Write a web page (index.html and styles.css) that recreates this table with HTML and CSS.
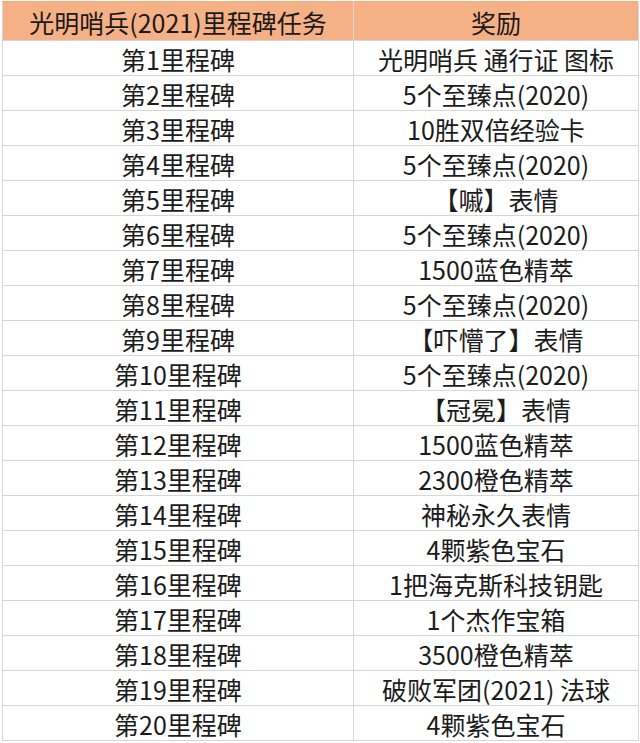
FILE: index.html
```html
<!DOCTYPE html>
<html lang="zh-CN">
<head>
<meta charset="utf-8">
<link rel="stylesheet" href="styles.css">
</head>
<body>
<table class="tbl">
  <thead>
    <tr class="head"><th class="c1">光明哨兵(2021)里程碑任务</th><th class="c2">奖励</th></tr>
  </thead>
  <tbody>
    <tr><td>第1里程碑</td><td>光明哨兵 通行证 图标</td></tr>
    <tr><td>第2里程碑</td><td>5个至臻点(2020)</td></tr>
    <tr><td>第3里程碑</td><td>10胜双倍经验卡</td></tr>
    <tr><td>第4里程碑</td><td>5个至臻点(2020)</td></tr>
    <tr><td>第5里程碑</td><td>【嘁】表情</td></tr>
    <tr><td>第6里程碑</td><td>5个至臻点(2020)</td></tr>
    <tr><td>第7里程碑</td><td>1500蓝色精萃</td></tr>
    <tr><td>第8里程碑</td><td>5个至臻点(2020)</td></tr>
    <tr><td>第9里程碑</td><td>【吓懵了】表情</td></tr>
    <tr><td>第10里程碑</td><td>5个至臻点(2020)</td></tr>
    <tr><td>第11里程碑</td><td>【冠冕】表情</td></tr>
    <tr><td>第12里程碑</td><td>1500蓝色精萃</td></tr>
    <tr><td>第13里程碑</td><td>2300橙色精萃</td></tr>
    <tr><td>第14里程碑</td><td>神秘永久表情</td></tr>
    <tr><td>第15里程碑</td><td>4颗紫色宝石</td></tr>
    <tr><td>第16里程碑</td><td>1把海克斯科技钥匙</td></tr>
    <tr><td>第17里程碑</td><td>1个杰作宝箱</td></tr>
    <tr><td>第18里程碑</td><td>3500橙色精萃</td></tr>
    <tr><td>第19里程碑</td><td>破败军团(2021) 法球</td></tr>
    <tr><td>第20里程碑</td><td>4颗紫色宝石</td></tr>
  </tbody>
</table>
</body>
</html>
```
FILE: styles.css
```css
html, body {
  margin: 0;
  padding: 0;
  background: #ffffff;
}
body {
  padding: 1px 0 0 2px;
  font-family: "Noto Sans CJK SC", "Noto Sans", sans-serif;
  color: #1c1c1c;
}
.tbl {
  border-collapse: collapse;
  table-layout: fixed;
  width: 637px;
}
.tbl th, .tbl td {
  border: 1px solid #d6d6d6;
  padding: 2px 0 0 0;
  text-align: center;
  vertical-align: middle;
  font-size: 25px;
  line-height: 1;
  white-space: nowrap;
}
.tbl th {
  font-weight: normal;
  font-size: 25px;
  background: #f6b086;
  height: 36px;
  border-color: #f6b086 #d6d6d6 #d6d6d6 #d6d6d6;
  color: #1a1a1a;
}
.tbl .c1 { width: 350px; }
.tbl td { height: 32px; }
```
